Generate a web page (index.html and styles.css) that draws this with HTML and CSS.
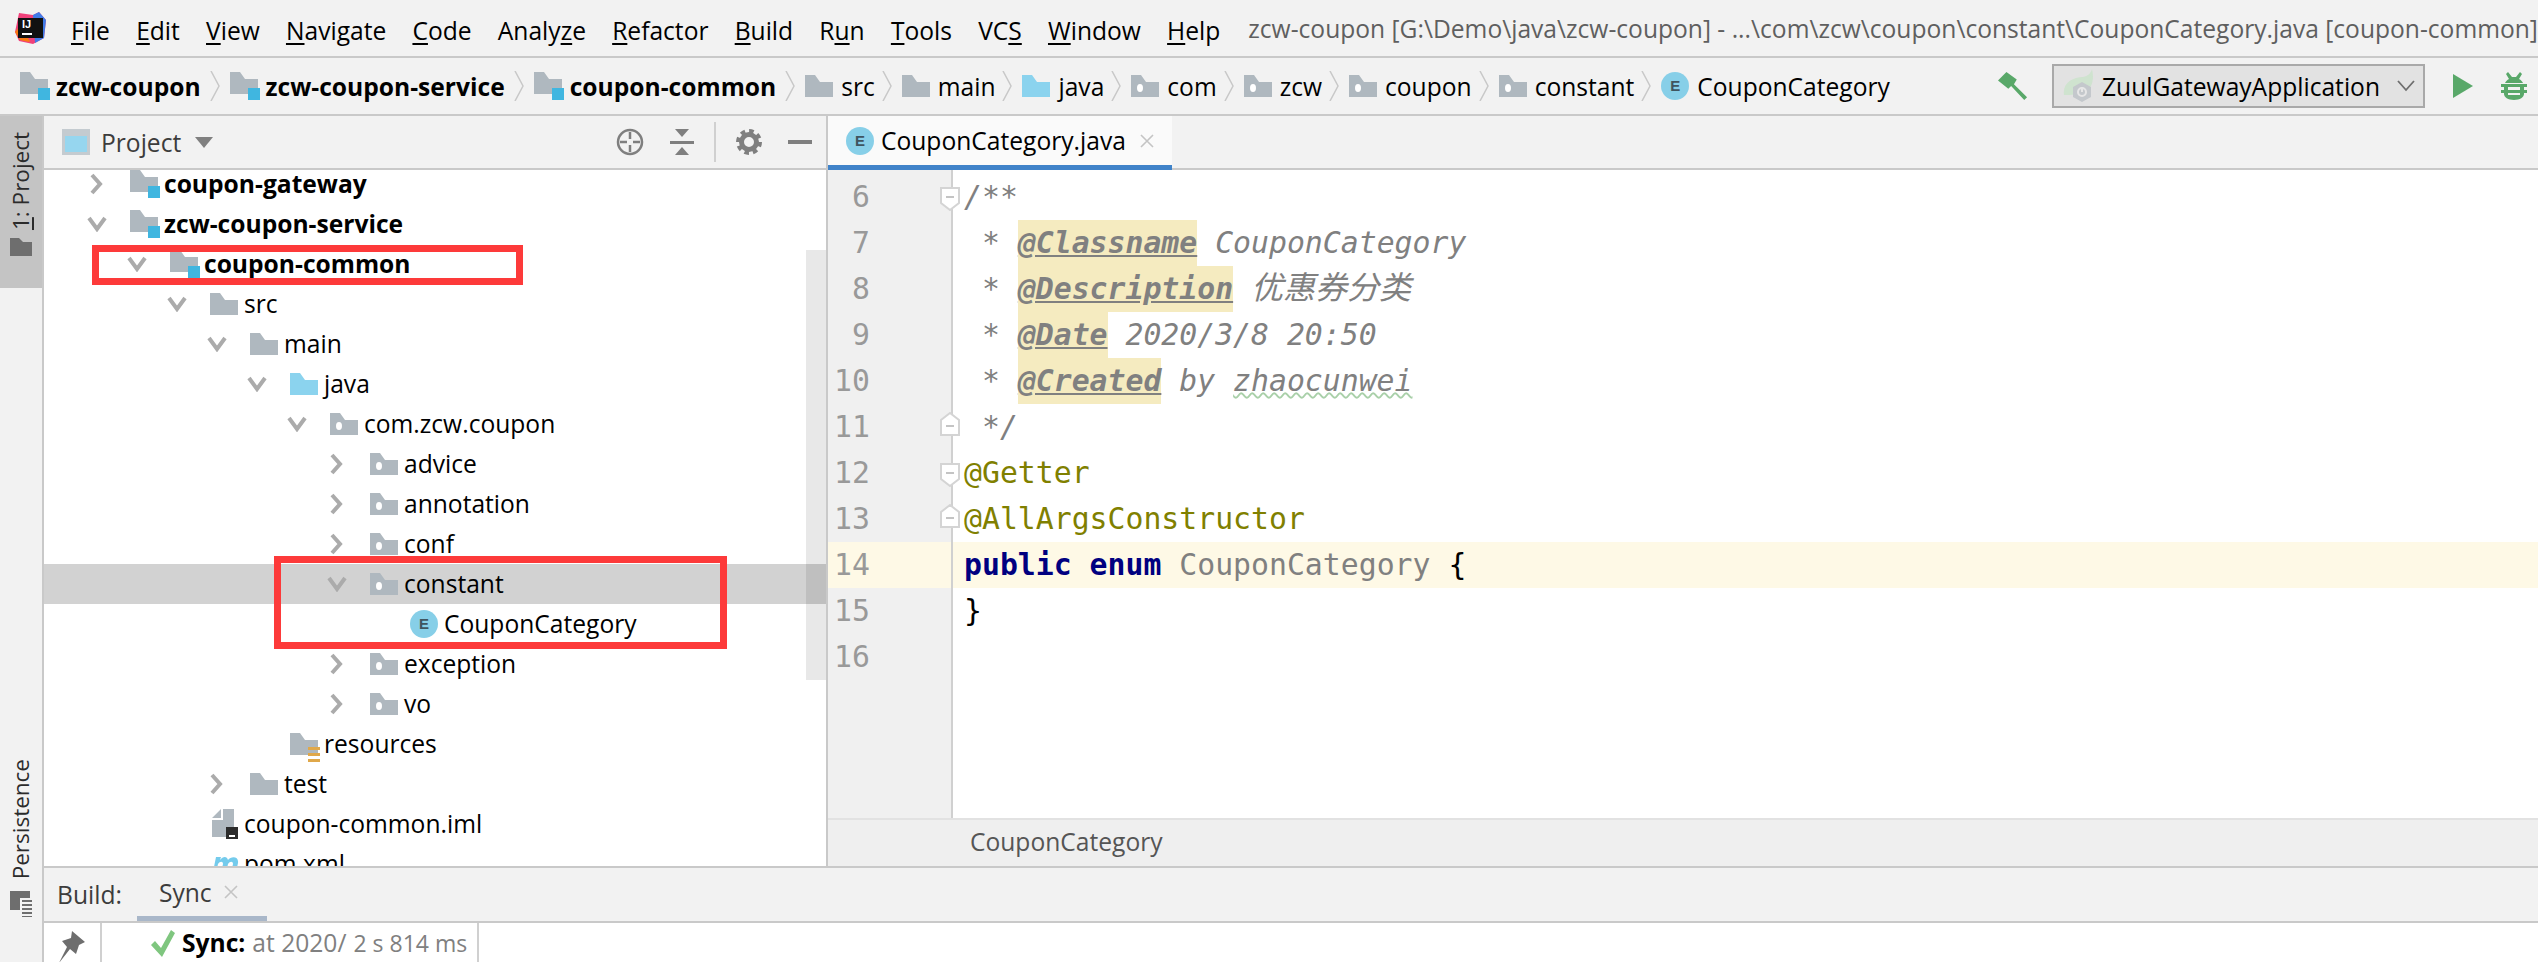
FILE: index.html
```html
<!DOCTYPE html>
<html lang="en">
<head>
  <meta charset="UTF-8" />
  <title>zcw-coupon</title>
  <link rel="stylesheet" href="styles.css">
</head>
<body>

  <svg class="defs" width="0" height="0">
    <symbol id="folder" viewBox="0 0 28 22"><path d="M0 0h10l5 7h13v15H0z" fill="#afb8bf"/></symbol>
    <symbol id="source" viewBox="0 0 28 22"><path d="M0 0h10l5 7h13v15H0z" fill="#8bd3ee"/></symbol>
    <symbol id="package" viewBox="0 0 28 22"><path d="M0 0h10l5 7h13v15H0z" fill="#afb8bf"/><ellipse cx="9" cy="13" rx="3" ry="4" fill="#fff"/></symbol>
    <symbol id="module" viewBox="0 0 30 28"><path d="M0 0h10l5 7h13v15H0z" fill="#afb8bf"/><path d="M18 16h12v12H18z" fill="#40b6e0"/></symbol>
    <symbol id="chev-right" viewBox="0 0 14 24"><path d="M2 3l8 9-8 9" fill="none" stroke="#ababab" stroke-width="4"/></symbol>
    <symbol id="chev-down" viewBox="0 0 20 16"><path d="M2 2l8 11 8-11" fill="none" stroke="#ababab" stroke-width="4"/></symbol>
    <symbol id="crumb" viewBox="0 0 10 30"><path d="M1 0l8 15-8 15" fill="none" stroke="#c8c8c8" stroke-width="1.5"/></symbol>
    <symbol id="fold-start" viewBox="0 0 20 24"><path d="M1 1h18v15l-9 7-9-7z" fill="#fff" stroke="#d4d4d4" stroke-width="2"/><path d="M6 10h8" stroke="#c4c4c4" stroke-width="2"/></symbol>
    <symbol id="fold-end" viewBox="0 0 20 24"><path d="M1 23h18V8L10 1 1 8z" fill="#fff" stroke="#d4d4d4" stroke-width="2"/><path d="M6 14h8" stroke="#c4c4c4" stroke-width="2"/></symbol>
  </svg>

  <div class="menubar">
    <svg class="logo" width="32" height="32" viewBox="0 0 32 32">
      <path d="M4 1l14 2 6-3 7 8-2 18-11 6-14-3L0 20z" fill="#f0417a"/>
      <path d="M18 3l6-3 7 8-2 18-9 5z" fill="#3f7ce8"/>
      <path d="M0 20l5-6 10 15-1 1-9-2z" fill="#f97a12"/>
      <path d="M3 6h25v20H3z" fill="#111"/>
      <text x="7" y="16" font-size="11" font-weight="700" fill="#fff" font-family="Liberation Sans, sans-serif">IJ</text>
      <path d="M7 21h10v2H7z" fill="#fff"/>
    </svg>
    <nav class="menu">
      <span><u>F</u>ile</span><span><u>E</u>dit</span><span><u>V</u>iew</span><span><u>N</u>avigate</span><span><u>C</u>ode</span><span>Analy<u>z</u>e</span><span><u>R</u>efactor</span><span><u>B</u>uild</span><span>R<u>u</u>n</span><span><u>T</u>ools</span><span>VC<u>S</u></span><span><u>W</u>indow</span><span><u>H</u>elp</span>
    </nav>
    <span class="window-title">zcw-coupon [G:\Demo\java\zcw-coupon] - ...\com\zcw\coupon\constant\CouponCategory.java [coupon-common]</span>
  </div>

  <div class="navbar">
    <div class="crumbs">
      <svg class="ic-module"><use href="#module"/></svg><b>zcw-coupon</b><svg class="sep"><use href="#crumb"/></svg>
      <svg class="ic-module"><use href="#module"/></svg><b>zcw-coupon-service</b><svg class="sep"><use href="#crumb"/></svg>
      <svg class="ic-module"><use href="#module"/></svg><b>coupon-common</b><svg class="sep"><use href="#crumb"/></svg>
      <svg class="ic-folder"><use href="#folder"/></svg><span>src</span><svg class="sep"><use href="#crumb"/></svg>
      <svg class="ic-folder"><use href="#folder"/></svg><span>main</span><svg class="sep"><use href="#crumb"/></svg>
      <svg class="ic-folder"><use href="#source"/></svg><span>java</span><svg class="sep"><use href="#crumb"/></svg>
      <svg class="ic-folder"><use href="#package"/></svg><span>com</span><svg class="sep"><use href="#crumb"/></svg>
      <svg class="ic-folder"><use href="#package"/></svg><span>zcw</span><svg class="sep"><use href="#crumb"/></svg>
      <svg class="ic-folder"><use href="#package"/></svg><span>coupon</span><svg class="sep"><use href="#crumb"/></svg>
      <svg class="ic-folder"><use href="#package"/></svg><span>constant</span><svg class="sep"><use href="#crumb"/></svg>
      <i class="enum">E</i><span>CouponCategory</span>
    </div>
    <div class="runbar">
      <svg class="hammer" width="30" height="30" viewBox="0 0 32 30"><path d="M9 0l11 8-3 5 14 14-3 3L14 15l-3 3L0 9z" fill="#59a869"/></svg>
      <div class="run-config">
        <svg width="32" height="34" viewBox="0 0 32 34"><path d="M1 26C-1 14 10 8 20 8c5-1 8-4 9-8 3 12-1 22-10 24-8 2-13 2-18 2z" fill="#cfe3cf"/><path d="M19 13l9 5v10l-9 5-9-5V18z" fill="#c4c8cc"/><circle cx="19" cy="23" r="4" fill="none" stroke="#e6e6e6" stroke-width="2"/><path d="M19 18v5" stroke="#e6e6e6" stroke-width="2"/></svg>
        <span>ZuulGatewayApplication</span>
        <svg class="config-arrow" width="18" height="12" viewBox="0 0 18 12"><path d="M1 1l8 9 8-9" fill="none" stroke="#6e6e6e" stroke-width="1.8"/></svg>
      </div>
      <svg class="play" width="20" height="24" viewBox="0 0 20 24"><path d="M0 0l20 12L0 24z" fill="#59a869"/></svg>
      <svg class="bug" width="26" height="28" viewBox="0 0 26 28"><path d="M7 0l4 5h4l4-5 2 2-3 5c2 1 3 2 4 4H4c1-2 2-3 4-4L5 2zM0 12h26v3h-3v3h3v3h-3v1c0 3-4 6-10 6S3 25 3 22v-1H0v-3h3v-3H0zM7 15v3h12v-3zM7 21v2h12v-2z" fill="#59a869" fill-rule="evenodd"/></svg>
    </div>
  </div>

  <div class="workspace">
    <aside class="stripe">
      <div class="stripe-btn active">
        <span class="stripe-label"><u>1</u>: Project</span>
        <svg width="22" height="18" viewBox="0 0 22 18"><path d="M0 0h9l4 4h9v14H0z" fill="#6e6e6e"/></svg>
      </div>
      <div class="stripe-btn bottom">
        <span class="stripe-label">Persistence</span>
        <svg width="22" height="26" viewBox="0 0 22 26"><path d="M0 0h20v7H10v12H0z" fill="#6e6e6e"/><path d="M12 9h10v2H12zM12 13h10v2H12zM12 17h10v2H12zM12 21h10v2H12zM12 25h10v1H12z" fill="#6e6e6e"/></svg>
      </div>
    </aside>

    <div class="content">
      <div class="split">
        <section class="project">
          <header class="panel-head">
            <svg width="28" height="26" viewBox="0 0 28 26"><path d="M0 0h28v26H0z" fill="#c4cbd0"/><path d="M3 7h22v16H3z" fill="#96d6ef"/></svg>
            <span class="panel-title">Project</span>
            <svg class="caret" width="18" height="11" viewBox="0 0 18 11"><path d="M0 0h18l-9 11z" fill="#808080"/></svg>
            <div class="panel-tools">
              <svg width="28" height="28" viewBox="0 0 28 28"><circle cx="14" cy="14" r="12" fill="none" stroke="#7f7f7f" stroke-width="2.5"/><path d="M14 4v7M14 17v7M4 14h7M17 14h7" stroke="#7f7f7f" stroke-width="2.5"/></svg>
              <svg width="24" height="26" viewBox="0 0 24 26"><path d="M5 0h14l-7 8zM0 12h24v3H0zM12 18l7 8H5z" fill="#7f7f7f"/></svg>
              <i class="tool-sep"></i>
              <svg width="26" height="28" viewBox="0 0 26 28"><circle cx="13" cy="14" r="7.5" fill="none" stroke="#7f7f7f" stroke-width="5"/><circle cx="13" cy="14" r="11" fill="none" stroke="#7f7f7f" stroke-width="4" stroke-dasharray="4.6 4"/></svg>
              <svg width="24" height="4" viewBox="0 0 24 4"><path d="M0 0h24v4H0z" fill="#7f7f7f"/></svg>
            </div>
          </header>
          <div class="tree-clip">
            <div class="tree">
              <div class="row lv1"><svg class="chev r"><use href="#chev-right"/></svg><svg class="ic-module"><use href="#module"/></svg><b>coupon-gateway</b></div>
              <div class="row lv1"><svg class="chev d"><use href="#chev-down"/></svg><svg class="ic-module"><use href="#module"/></svg><b>zcw-coupon-service</b></div>
              <div class="row lv2"><svg class="chev d"><use href="#chev-down"/></svg><svg class="ic-module"><use href="#module"/></svg><b>coupon-common</b></div>
              <div class="row lv3"><svg class="chev d"><use href="#chev-down"/></svg><svg class="ic-folder"><use href="#folder"/></svg><span>src</span></div>
              <div class="row lv4"><svg class="chev d"><use href="#chev-down"/></svg><svg class="ic-folder"><use href="#folder"/></svg><span>main</span></div>
              <div class="row lv5"><svg class="chev d"><use href="#chev-down"/></svg><svg class="ic-folder"><use href="#source"/></svg><span>java</span></div>
              <div class="row lv6"><svg class="chev d"><use href="#chev-down"/></svg><svg class="ic-folder"><use href="#package"/></svg><span>com.zcw.coupon</span></div>
              <div class="row lv7"><svg class="chev r"><use href="#chev-right"/></svg><svg class="ic-folder"><use href="#package"/></svg><span>advice</span></div>
              <div class="row lv7"><svg class="chev r"><use href="#chev-right"/></svg><svg class="ic-folder"><use href="#package"/></svg><span>annotation</span></div>
              <div class="row lv7"><svg class="chev r"><use href="#chev-right"/></svg><svg class="ic-folder"><use href="#package"/></svg><span>conf</span></div>
              <div class="row lv7 selected"><svg class="chev d"><use href="#chev-down"/></svg><svg class="ic-folder"><use href="#package"/></svg><span>constant</span></div>
              <div class="row lv8"><i class="nochev"></i><i class="enum">E</i><span>CouponCategory</span></div>
              <div class="row lv7"><svg class="chev r"><use href="#chev-right"/></svg><svg class="ic-folder"><use href="#package"/></svg><span>exception</span></div>
              <div class="row lv7"><svg class="chev r"><use href="#chev-right"/></svg><svg class="ic-folder"><use href="#package"/></svg><span>vo</span></div>
              <div class="row lv5"><i class="nochev"></i><svg class="ic-res" width="30" height="31" viewBox="0 0 30 31"><path d="M0 0h10l5 7h13v15H0z" fill="#afb8bf"/><path d="M18 14h12v3H18zM18 20h12v3H18zM18 26h12v3H18z" fill="#e0a84a"/></svg><span>resources</span></div>
              <div class="row lv4"><svg class="chev r"><use href="#chev-right"/></svg><svg class="ic-folder"><use href="#folder"/></svg><span>test</span></div>
              <div class="row lv3 file"><svg class="ic-file" width="26" height="30" viewBox="0 0 26 30"><path d="M11 0h11v28H0V11h11zM0 9l9-9v9z" fill="#afb8bf"/><path d="M14 18h12v12H14z" fill="#2b2b2b"/><path d="M17 26h6v2h-6z" fill="#fff"/></svg><span>coupon-common.iml</span></div>
              <div class="row lv3 file"><svg class="ic-file" width="30" height="26" viewBox="0 0 30 26"><path d="M2 26L6 6h5l-1 3c3-4 7-4 8 0 3-4 11-4 10 3l-3 14h-5l3-13c0-3-3-3-5 0l-3 13h-5l3-13c0-3-3-3-5 0L5 26z" fill="#74cbec"/></svg><span>pom.xml</span></div>
            </div>
            <div class="tree-scroll"></div>
          </div>
        </section>

        <section class="editor">
          <div class="tabbar">
            <div class="tab">
              <i class="enum">E</i><span>CouponCategory.java</span>
              <svg width="14" height="14" viewBox="0 0 14 14"><path d="M1 1l12 12M13 1L1 13" stroke="#c4c4c4" stroke-width="1.6"/></svg>
            </div>
          </div>
          <div class="code-area">
            <div class="gutter">
              <div class="num">6<svg class="fold f1"><use href="#fold-start"/></svg></div>
              <div class="num">7</div>
              <div class="num">8</div>
              <div class="num">9</div>
              <div class="num">10</div>
              <div class="num">11<svg class="fold f2"><use href="#fold-end"/></svg></div>
              <div class="num">12<svg class="fold f1"><use href="#fold-start"/></svg></div>
              <div class="num">13<svg class="fold f2"><use href="#fold-end"/></svg></div>
              <div class="num current">14</div>
              <div class="num">15</div>
              <div class="num">16</div>
            </div>
            <div class="code">
              <div class="line doc">/**</div>
              <div class="line doc"> * <span class="tag">@Classname</span> CouponCategory</div>
              <div class="line doc"> * <span class="tag">@Description</span> <span class="cjk">优惠券分类</span></div>
              <div class="line doc"> * <span class="tag">@Date</span> 2020/3/8 20:50</div>
              <div class="line doc"> * <span class="tag">@Created</span> by <span class="typo">zhaocunwei</span></div>
              <div class="line doc"> */</div>
              <div class="line anno">@Getter</div>
              <div class="line anno">@AllArgsConstructor</div>
              <div class="line current"><span class="kw">public enum</span> <span class="type">CouponCategory</span> {</div>
              <div class="line">}</div>
              <div class="line"></div>
            </div>
          </div>
          <div class="editor-crumb">CouponCategory</div>
        </section>
      </div>

      <section class="build">
        <div class="build-tabs">
          <span class="build-label">Build:</span>
          <div class="build-tab">
            <span>Sync</span>
            <svg width="14" height="14" viewBox="0 0 14 14"><path d="M1 1l12 12M13 1L1 13" stroke="#c4c4c4" stroke-width="1.6"/></svg>
          </div>
        </div>
        <div class="build-body">
          <div class="build-tools">
            <svg width="28" height="32" viewBox="0 0 28 32"><path d="M14 0l13 11-6 3-3 9-6-5-11 14 8-16-5-6 9-3z" fill="#6e6e6e"/></svg>
          </div>
          <div class="build-tree">
            <svg width="25" height="30" viewBox="0 0 25 30"><path d="M1 17l4-4 6 7L21 2l4 3-13 24z" fill="#7fc67f"/></svg>
            <b>Sync:</b>
            <span class="muted">at 2020/</span>
            <span class="muted time">2 s 814 ms</span>
          </div>
        </div>
      </section>
    </div>
  </div>

  <div class="callout box-common"></div>
  <div class="callout box-constant"></div>

</body>
</html>
```

FILE: styles.css
```css
* {
  box-sizing: border-box;
}

html, body {
  height: 100%;
}

body {
  margin: 0;
  width: 2538px;
  height: 962px;
  overflow: hidden;
  position: relative;
  display: flex;
  flex-direction: column;
  background-color: #fff;
  color: #000;
  font-family: "Open Sans", "Noto Sans CJK SC", sans-serif;
  font-size: 24.6px;
}

.defs {
  position: absolute;
}

svg {
  flex: none;
  display: block;
}

i {
  font-style: normal;
}

b {
  font-weight: 700;
}

/* menu */
.menubar {
  height: 58px;
  flex: none;
  display: flex;
  align-items: center;
  background-color: #f2f2f2;
  border-bottom: 2px solid #c9c9c9;
  padding-left: 15px;
  white-space: nowrap;
  overflow: hidden;
}

.menu {
  display: flex;
  gap: 26.2px;
  margin-left: 24px;
  margin-top: 4px;
}

.menu u {
  text-underline-offset: 3px;
}

.window-title {
  margin-left: 28px;
  color: #5f5f5f;
}

/* breadcrumbs and run */
.navbar {
  height: 58px;
  flex: none;
  display: flex;
  align-items: center;
  justify-content: space-between;
  padding-right: 11px;
  background-color: #f2f2f2;
  border-bottom: 2px solid #c9c9c9;
}

.crumbs {
  display: flex;
  align-items: center;
  padding-left: 20px;
  white-space: nowrap;
}

.sep {
  width: 10px;
  height: 30px;
  margin: 0 10px 0 9px;
}

span + .sep {
  margin-left: 7px;
}

.ic-module {
  width: 30px;
  height: 28px;
  margin-right: 6px;
}

.ic-folder {
  width: 28px;
  height: 22px;
  margin-right: 8px;
}

.enum {
  flex: none;
  width: 28px;
  height: 28px;
  border-radius: 50%;
  background-color: #87cfe8;
  color: #3f5560;
  font-size: 15px;
  font-weight: 700;
  line-height: 28px;
  text-align: center;
  font-family: "Liberation Sans", sans-serif;
  margin-right: 8px;
}

.runbar {
  display: flex;
  align-items: center;
}

.run-config {
  width: 373px;
  height: 44px;
  margin-left: 24px;
  padding-left: 9px;
  display: flex;
  align-items: center;
  gap: 7px;
  background-color: #e2e2e2;
  border: 2px solid #a9a9a9;
  white-space: nowrap;
}

.config-arrow {
  margin-left: auto;
  margin-right: 8px;
}

.play {
  margin-left: 28px;
}

.bug {
  margin-left: 28px;
}

/* main area */
.workspace {
  flex: 1;
  min-height: 0;
  display: flex;
}

.stripe {
  width: 44px;
  flex: none;
  display: flex;
  flex-direction: column;
  background-color: #f2f2f2;
  border-right: 2px solid #c9c9c9;
}

.stripe-btn {
  display: flex;
  flex-direction: column;
  align-items: center;
  gap: 12px;
}

.stripe-btn.active {
  height: 172px;
  padding-top: 16px;
  gap: 8px;
  background-color: #c4c4c4;
}

.stripe-btn.bottom {
  margin-top: auto;
  padding-bottom: 45px;
}

.stripe-label {
  writing-mode: vertical-rl;
  transform: rotate(180deg);
  color: #2b2b2b;
  font-size: 22.5px;
  line-height: 24px;
  white-space: nowrap;
}

.content {
  flex: 1;
  min-width: 0;
  min-height: 0;
  display: flex;
  flex-direction: column;
}

.split {
  flex: 1;
  min-height: 0;
  display: flex;
}

/* project panel */
.project {
  width: 784px;
  flex: none;
  display: flex;
  flex-direction: column;
  border-right: 2px solid #c9c9c9;
}

.panel-head {
  height: 54px;
  flex: none;
  display: flex;
  align-items: center;
  padding-left: 18px;
  background-color: #f2f2f2;
  border-bottom: 2px solid #c9c9c9;
}

.panel-title {
  margin-left: 11px;
  color: #3c3c3c;
}

.caret {
  margin-left: 14px;
}

.panel-tools {
  margin-left: auto;
  margin-right: 14px;
  display: flex;
  align-items: center;
  gap: 26px;
}

.tool-sep {
  width: 2px;
  height: 40px;
  margin: 0 -6px;
  background-color: #d0d0d0;
}

.tree-clip {
  flex: 1;
  min-height: 0;
  overflow: hidden;
  position: relative;
}

.tree {
  margin-top: -6px;
}

.row {
  height: 40px;
  display: flex;
  align-items: center;
  white-space: nowrap;
}

.row > b,
.row > span {
  margin-top: -2px;
}

.lv1 { padding-left: 40px; }
.lv2 { padding-left: 80px; }
.lv3 { padding-left: 120px; }
.lv4 { padding-left: 160px; }
.lv5 { padding-left: 200px; }
.lv6 { padding-left: 240px; }
.lv7 { padding-left: 280px; }
.lv8 { padding-left: 320px; }

.row.file {
  padding-left: 166px;
}

.row.selected {
  background-color: #d2d2d2;
}

.chev {
  margin-right: 26px;
}

.chev.r {
  width: 14px;
  height: 24px;
  margin-left: 6px;
}

.chev.d {
  width: 20px;
  height: 16px;
  margin-left: 3px;
  margin-right: 23px;
}

.nochev {
  width: 46px;
  flex: none;
}

.row .ic-module {
  margin-right: 4px;
}

.row .ic-folder {
  margin-right: 6px;
}

.row .enum {
  margin-left: 0;
  margin-right: 6px;
}

.ic-res {
  margin-top: 8px;
  margin-right: 4px;
}

.ic-file {
  margin-right: 4px;
}

.row.file .ic-file {
  width: 30px;
}

.tree-scroll {
  position: absolute;
  right: 0;
  top: 80px;
  width: 20px;
  height: 430px;
  background-color: rgba(0, 0, 0, 0.09);
}

/* editor */
.editor {
  flex: 1;
  min-width: 0;
  display: flex;
  flex-direction: column;
}

.tabbar {
  height: 54px;
  flex: none;
  background-color: #f2f2f2;
  border-bottom: 2px solid #c9c9c9;
}

.tab {
  width: 344px;
  height: 54px;
  display: flex;
  align-items: center;
  padding-left: 18px;
  background-color: #fafafa;
  border-bottom: 5px solid #4083c9;
  white-space: nowrap;
}

.tab .enum {
  margin-right: 7px;
}

.tab svg {
  margin-left: 14px;
}

.code-area {
  flex: 1;
  min-height: 0;
  display: flex;
  background-color: #fff;
  font-family: "DejaVu Sans Mono", monospace;
  font-size: 29.8px;
  line-height: 46px;
}

.gutter {
  width: 125px;
  flex: none;
  padding-top: 4px;
  background-color: #f0f0f0;
  border-right: 2px solid #d0d0d0;
}

.num {
  height: 46px;
  position: relative;
  padding-right: 81px;
  text-align: right;
  color: #999;
}

.num.current {
  background-color: #fef9e6;
}

.fold {
  position: absolute;
  width: 20px;
  height: 24px;
  right: -9px;
}

.fold.f1 {
  top: 13px;
}

.fold.f2 {
  top: 8px;
}

.code {
  flex: 1;
  min-width: 0;
  padding-top: 4px;
}

.line {
  height: 46px;
  padding-left: 11px;
  white-space: pre;
}

.line.current {
  background-color: #fef9e6;
}

.doc {
  color: #808080;
  font-style: italic;
}

.tag {
  display: inline-block;
  height: 46px;
  background-color: #f5ebc0;
  font-weight: 700;
  text-decoration: underline;
}

.cjk {
  font-family: "Noto Sans CJK SC", sans-serif;
  font-size: 32px;
  line-height: 1px;
}

.typo {
  text-decoration: underline wavy #a9d0a9 1.5px;
}

.anno {
  color: #808000;
}

.kw {
  color: #000080;
  font-weight: 700;
}

.type {
  color: #808080;
}

.editor-crumb {
  height: 48px;
  flex: none;
  padding-left: 142px;
  padding-bottom: 3px;
  display: flex;
  align-items: center;
  background-color: #efefef;
  border-top: 2px solid #e2e2e2;
  color: #555;
}

/* build panel */
.build {
  height: 96px;
  flex: none;
  display: flex;
  flex-direction: column;
  border-top: 2px solid #c9c9c9;
}

.build-tabs {
  height: 55px;
  flex: none;
  display: flex;
  align-items: stretch;
  background-color: #f2f2f2;
  border-bottom: 2px solid #c9c9c9;
}

.build-label {
  margin-left: 13px;
  align-self: center;
  color: #3c3c3c;
}

.build-tab {
  width: 130px;
  margin-left: 15px;
  padding-left: 22px;
  display: flex;
  align-items: center;
  gap: 12px;
  color: #3c3c3c;
  border-bottom: 5px solid #a9b7c9;
}

.build-body {
  flex: 1;
  min-height: 0;
  display: flex;
  overflow: hidden;
}

.build-tools {
  width: 58px;
  flex: none;
  display: flex;
  justify-content: center;
  padding-top: 8px;
  border-right: 2px solid #d0d0d0;
}

.build-tree {
  width: 377px;
  flex: none;
  display: flex;
  align-items: center;
  gap: 7px;
  padding-left: 48px;
  border-right: 2px solid #d0d0d0;
  white-space: nowrap;
}

.muted {
  color: #808080;
}

.time {
  font-size: 23px;
}

/* red boxes drawn over the screenshot */
.callout {
  position: absolute;
  border: 7px solid #fd3a3a;
}

.box-common {
  left: 92px;
  top: 245px;
  width: 431px;
  height: 40px;
}

.box-constant {
  left: 274px;
  top: 556px;
  width: 453px;
  height: 93px;
}
```
